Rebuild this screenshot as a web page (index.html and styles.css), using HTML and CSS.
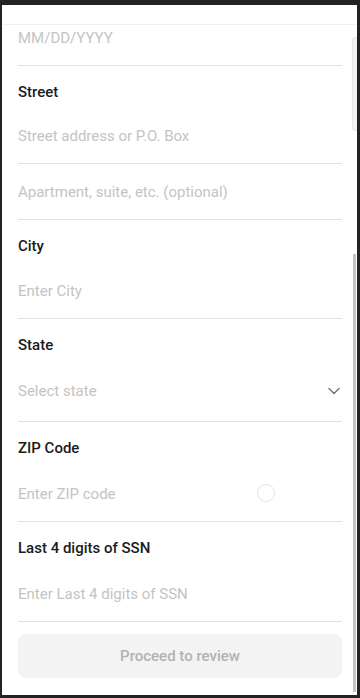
FILE: index.html
```html
<!DOCTYPE html>
<html lang="en">
<head>
    <meta charset="UTF-8">
    <meta name="viewport" content="width=device-width, initial-scale=1.0">
    <title>Personal details</title>
    <link rel="stylesheet" href="styles.css">
</head>
<body>
    <div class="screen">
        <div class="sheet-head">
            <span class="sheet-head-label">Date of birth</span>
        </div>

        <form class="form" onsubmit="return false;">
            <div class="field field-first">
                <input class="input input-first" type="text" placeholder="MM/DD/YYYY">
            </div>

            <div class="field">
                <label class="label">Street</label>
                <input class="input input-street" type="text" placeholder="Street address or P.O. Box">
                <input class="input input-plain" type="text" placeholder="Apartment, suite, etc. (optional)">
            </div>

            <div class="field">
                <label class="label">City</label>
                <input class="input input-city" type="text" placeholder="Enter City">
            </div>

            <div class="field">
                <label class="label">State</label>
                <div class="select">
                    <span class="select-placeholder">Select state</span>
                    <svg class="chevron" width="14" height="14" viewBox="0 0 14 14">
                        <path d="M2 4.5 L7 9.5 L12 4.5" fill="none" stroke="#6f6f6f" stroke-width="1.3" stroke-linecap="round" stroke-linejoin="round"/>
                    </svg>
                </div>
            </div>

            <div class="field">
                <label class="label">ZIP Code</label>
                <div class="input-wrap">
                    <input class="input" type="text" placeholder="Enter ZIP code">
                    <span class="spinner"></span>
                </div>
            </div>

            <div class="field">
                <label class="label">Last 4 digits of SSN</label>
                <input class="input" type="text" placeholder="Enter Last 4 digits of SSN">
            </div>

            <button class="btn" type="submit" disabled>Proceed to review</button>
        </form>

        <div class="thumb thumb-outer"></div>
        <div class="thumb thumb-inner"></div>
    </div>
</body>
</html>
```

FILE: styles.css
```css
* {
    margin: 0;
    padding: 0;
    box-sizing: border-box;
}

body {
    background: #232323;
    font-family: 'Roboto', 'Liberation Sans', sans-serif;
    padding: 5px 3px 3px 2px;
    height: 698px;
    overflow: hidden;
}

.screen {
    position: relative;
    background: white;
    height: 690px;
    overflow: hidden;
}

.sheet-head {
    height: 20px;
    border-bottom: 1px solid #f1f1f1;
    overflow: hidden;
    padding: 0 16px;
}

.sheet-head-label {
    display: block;
    margin-top: -17px;
    line-height: 20px;
    font-size: 15px;
    font-weight: 500;
    color: #1b1b1b;
}

.form {
    padding: 0 15px 0 16px;
}

.field {
    display: flex;
    flex-direction: column;
}

.label {
    margin-top: 16px;
    line-height: 20px;
    font-size: 15px;
    font-weight: 500;
    color: #1b1b1b;
}

.input {
    display: block;
    width: 100%;
    height: 64px;
    padding: 25px 0 16px;
    line-height: 22px;
    border: none;
    border-bottom: 1px solid #e2e2e2;
    font-family: inherit;
    font-size: 15px;
    color: #1b1b1b;
    background: transparent;
    outline: none;
}

.input::placeholder {
    color: #c4c4c4;
}

.input-first {
    height: 41px;
    padding: 2px 0 16px;
}

.input-street {
    height: 62px;
    padding-top: 23px;
}

.input-city {
    height: 63px;
    padding-top: 24px;
}

.input-plain {
    height: 56px;
    padding: 17px 0 16px;
}

.select {
    display: flex;
    align-items: center;
    justify-content: space-between;
    height: 67px;
    padding: 24px 0 19px;
    border-bottom: 1px solid #e2e2e2;
}

.select-placeholder {
    line-height: 22px;
    font-size: 15px;
    color: #c4c4c4;
}

.chevron {
    margin-right: 1px;
}

.input-wrap {
    position: relative;
}

.spinner {
    position: absolute;
    left: 239px;
    top: 26px;
    width: 18px;
    height: 18px;
    border: 1.5px solid #dbe6f6;
    border-radius: 50%;
}

.btn {
    display: block;
    width: 100%;
    height: 44px;
    margin-top: 12px;
    border: none;
    border-radius: 8px;
    background: #f3f3f3;
    color: #b2b2b2;
    font-family: inherit;
    font-size: 15px;
    font-weight: 500;
}

.thumb {
    position: absolute;
    border-radius: 4px;
}

.thumb-outer {
    top: 32px;
    right: -1px;
    width: 6px;
    height: 94px;
    background: #f4f4f4;
    border: 1px solid #e6e6e6;
}

.thumb-inner {
    top: 249px;
    right: 1px;
    width: 3px;
    height: 438px;
    background: #c3c3c3;
    border-radius: 0;
}
```
